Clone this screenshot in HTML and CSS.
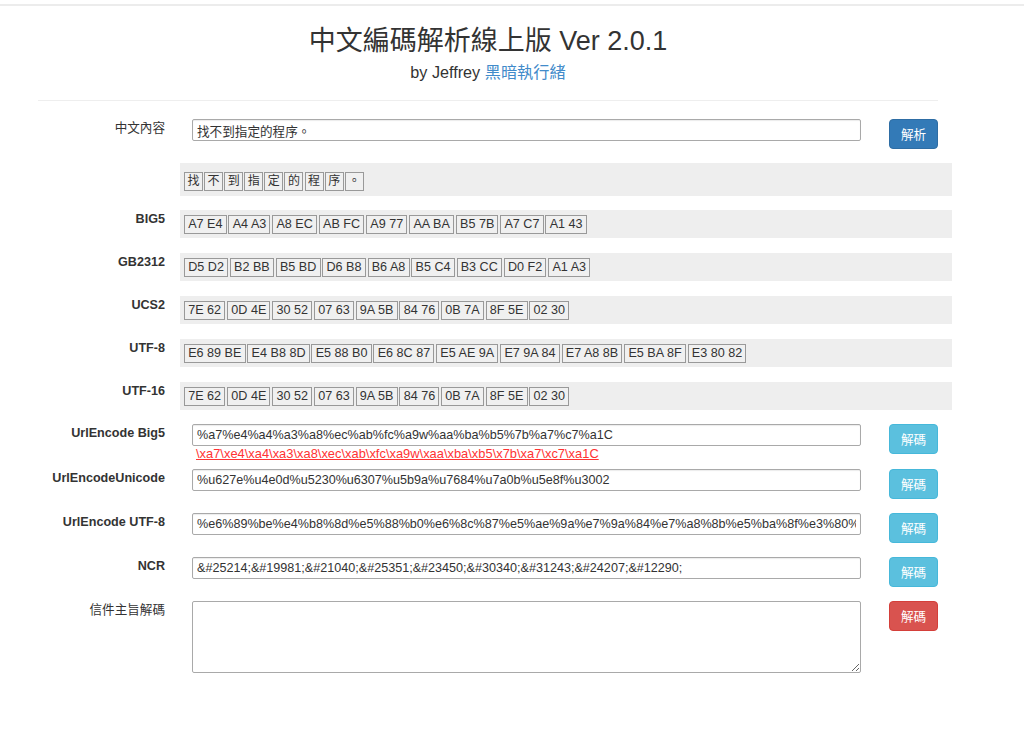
FILE: index.html
```html
<!DOCTYPE html>
<html lang="zh-Hant">
<head>
<meta charset="utf-8">
<title>中文編碼解析線上版</title>
<link rel="stylesheet" href="styles.css">
</head>
<body>
<div class="topbar"></div>
<div class="page">
  <header class="head">
    <h1 class="title">中文編碼解析線上版 Ver 2.0.1</h1>
    <div class="sub">by Jeffrey <a class="blog" href="#">黑暗執行緒</a></div>
  </header>
  <div class="rule"></div>

  <div class="row row-in">
    <div class="lbl cjk">中文內容</div>
    <div class="val">
      <div class="field"><input class="inp" type="text" value="找不到指定的程序。"></div>
      <button class="btn btn-primary">解析</button>
    </div>
  </div>

  <div class="row row-band first">
    <div class="lbl"></div>
    <div class="band band-chars">
      <span class="ch">找</span><span class="ch">不</span><span class="ch">到</span><span class="ch">指</span><span class="ch">定</span><span class="ch">的</span><span class="ch">程</span><span class="ch">序</span><span class="ch">。</span>
    </div>
  </div>

  <div class="row row-band">
    <div class="lbl">BIG5</div>
    <div class="band">
      <span class="hx">A7 E4</span><span class="hx">A4 A3</span><span class="hx">A8 EC</span><span class="hx">AB FC</span><span class="hx">A9 77</span><span class="hx">AA BA</span><span class="hx">B5 7B</span><span class="hx">A7 C7</span><span class="hx">A1 43</span>
    </div>
  </div>

  <div class="row row-band">
    <div class="lbl">GB2312</div>
    <div class="band">
      <span class="hx">D5 D2</span><span class="hx">B2 BB</span><span class="hx">B5 BD</span><span class="hx">D6 B8</span><span class="hx">B6 A8</span><span class="hx">B5 C4</span><span class="hx">B3 CC</span><span class="hx">D0 F2</span><span class="hx">A1 A3</span>
    </div>
  </div>

  <div class="row row-band">
    <div class="lbl">UCS2</div>
    <div class="band">
      <span class="hx">7E 62</span><span class="hx">0D 4E</span><span class="hx">30 52</span><span class="hx">07 63</span><span class="hx">9A 5B</span><span class="hx">84 76</span><span class="hx">0B 7A</span><span class="hx">8F 5E</span><span class="hx">02 30</span>
    </div>
  </div>

  <div class="row row-band">
    <div class="lbl">UTF-8</div>
    <div class="band">
      <span class="hx">E6 89 BE</span><span class="hx">E4 B8 8D</span><span class="hx">E5 88 B0</span><span class="hx">E6 8C 87</span><span class="hx">E5 AE 9A</span><span class="hx">E7 9A 84</span><span class="hx">E7 A8 8B</span><span class="hx">E5 BA 8F</span><span class="hx">E3 80 82</span>
    </div>
  </div>

  <div class="row row-band last">
    <div class="lbl">UTF-16</div>
    <div class="band">
      <span class="hx">7E 62</span><span class="hx">0D 4E</span><span class="hx">30 52</span><span class="hx">07 63</span><span class="hx">9A 5B</span><span class="hx">84 76</span><span class="hx">0B 7A</span><span class="hx">8F 5E</span><span class="hx">02 30</span>
    </div>
  </div>

  <div class="row row-in tall">
    <div class="lbl">UrlEncode Big5</div>
    <div class="val">
      <div class="field">
        <input class="inp" type="text" value="%a7%e4%a4%a3%a8%ec%ab%fc%a9w%aa%ba%b5%7b%a7%c7%a1C">
        <a class="esc" href="#">\xa7\xe4\xa4\xa3\xa8\xec\xab\xfc\xa9w\xaa\xba\xb5\x7b\xa7\xc7\xa1C</a>
      </div>
      <button class="btn btn-info">解碼</button>
    </div>
  </div>

  <div class="row row-in">
    <div class="lbl">UrlEncodeUnicode</div>
    <div class="val">
      <div class="field"><input class="inp" type="text" value="%u627e%u4e0d%u5230%u6307%u5b9a%u7684%u7a0b%u5e8f%u3002"></div>
      <button class="btn btn-info">解碼</button>
    </div>
  </div>

  <div class="row row-in">
    <div class="lbl">UrlEncode UTF-8</div>
    <div class="val">
      <div class="field"><input class="inp" type="text" value="%e6%89%be%e4%b8%8d%e5%88%b0%e6%8c%87%e5%ae%9a%e7%9a%84%e7%a8%8b%e5%ba%8f%e3%80%82"></div>
      <button class="btn btn-info">解碼</button>
    </div>
  </div>

  <div class="row row-in">
    <div class="lbl">NCR</div>
    <div class="val">
      <div class="field"><input class="inp" type="text" value="&amp;#25214;&amp;#19981;&amp;#21040;&amp;#25351;&amp;#23450;&amp;#30340;&amp;#31243;&amp;#24207;&amp;#12290;"></div>
      <button class="btn btn-info">解碼</button>
    </div>
  </div>

  <div class="row row-ta">
    <div class="lbl cjk">信件主旨解碼</div>
    <div class="val">
      <div class="field"><textarea class="ta"></textarea></div>
      <button class="btn btn-danger">解碼</button>
    </div>
  </div>
</div>
</body>
</html>
```

FILE: styles.css
```css
html, body {
  margin: 0;
  padding: 0;
  background: #fff;
}
body {
  font-family: "Liberation Sans", "Noto Sans CJK TC", sans-serif;
  font-size: 12.6px;
  color: #333;
}
.topbar {
  margin-top: 4px;
  height: 2px;
  background: #ececec;
}
.page {
  width: 900px;
  margin-left: 38px;
}
.head {
  padding-top: 20px;
  text-align: center;
}
.title {
  margin: 0;
  font-size: 27px;
  font-weight: normal;
  line-height: 30px;
  color: #333;
}
.sub {
  margin-top: 7px;
  font-size: 16.2px;
  line-height: 18px;
  color: #333;
}
.blog {
  color: #428bca;
  text-decoration: none;
}
.rule {
  margin-top: 19px;
  margin-bottom: 18px;
  border-top: 1px solid #eee;
}
.row {
  display: flex;
  align-items: flex-start;
}
.lbl {
  width: 127px;
  flex: none;
  padding-right: 5px;
  padding-top: 1px;
  text-align: right;
  font-weight: bold;
  font-size: 12.6px;
  line-height: 17px;
  color: #333;
  white-space: nowrap;
}
.lbl.cjk {
  font-weight: normal;
}
.val {
  margin-left: 10px;
  display: flex;
  align-items: flex-start;
  flex: none;
}
.row-in {
  height: 44px;
}
.row-in.tall {
  height: 45px;
}
.field {
  margin-left: 12px;
  width: 669px;
  flex: none;
  display: flex;
  flex-direction: column;
}
.inp {
  box-sizing: border-box;
  width: 669px;
  height: 22px;
  flex: none;
  margin: 0;
  padding: 0 4px;
  border: 1px solid #a9a9a9;
  border-radius: 2px;
  box-shadow: inset 0 1px 1px rgba(0, 0, 0, 0.08);
  font-family: "Liberation Sans", "Noto Sans CJK TC", sans-serif;
  font-size: 12.6px;
  color: #333;
  background: #fff;
  outline: none;
}
.esc {
  margin-left: 4px;
  font-size: 12.9px;
  line-height: 15px;
  color: #f33;
  text-decoration: underline;
  white-space: nowrap;
}
.ta {
  box-sizing: border-box;
  width: 669px;
  height: 72px;
  flex: none;
  margin: 0;
  border: 1px solid #a9a9a9;
  border-radius: 2px;
  font-family: "Liberation Sans", sans-serif;
  font-size: 12.6px;
  background: #fff;
}
.btn {
  margin-left: 28px;
  box-sizing: border-box;
  width: 49px;
  height: 30px;
  padding: 0;
  border: 1px solid transparent;
  border-radius: 4px;
  font-family: "Noto Sans CJK TC", "Liberation Sans", sans-serif;
  font-size: 12.6px;
  line-height: 28px;
  color: #fff;
  cursor: pointer;
  flex: none;
}
.btn-primary {
  background: #337ab7;
  border-color: #2e6da4;
}
.btn-info {
  background: #5bc0de;
  border-color: #46b8da;
}
.btn-danger {
  background: #d9534f;
  border-color: #d43f3a;
}
.row-band {
  margin-bottom: 15px;
}
.row-band.first {
  margin-bottom: 14px;
}
.row-band.last {
  margin-bottom: 14px;
}
.band {
  margin-left: 10px;
  box-sizing: border-box;
  width: 772px;
  flex: none;
  height: 28px;
  padding: 5px 4px 4px;
  background: #eee;
  display: flex;
  align-items: flex-start;
}
.band-chars {
  height: 33px;
  padding-top: 9px;
}
.ch, .hx {
  box-sizing: border-box;
  height: 19px;
  flex: none;
  border: 1px solid #999;
  background: #f0f0f0;
  line-height: 17px;
  font-size: 12.6px;
  color: #333;
  white-space: nowrap;
}
.ch {
  width: 19px;
  text-align: center;
  margin-right: 1.1px;
  font-size: 12px;
}
.hx {
  padding: 0 3.2px;
  margin-right: 1.8px;
}
```
